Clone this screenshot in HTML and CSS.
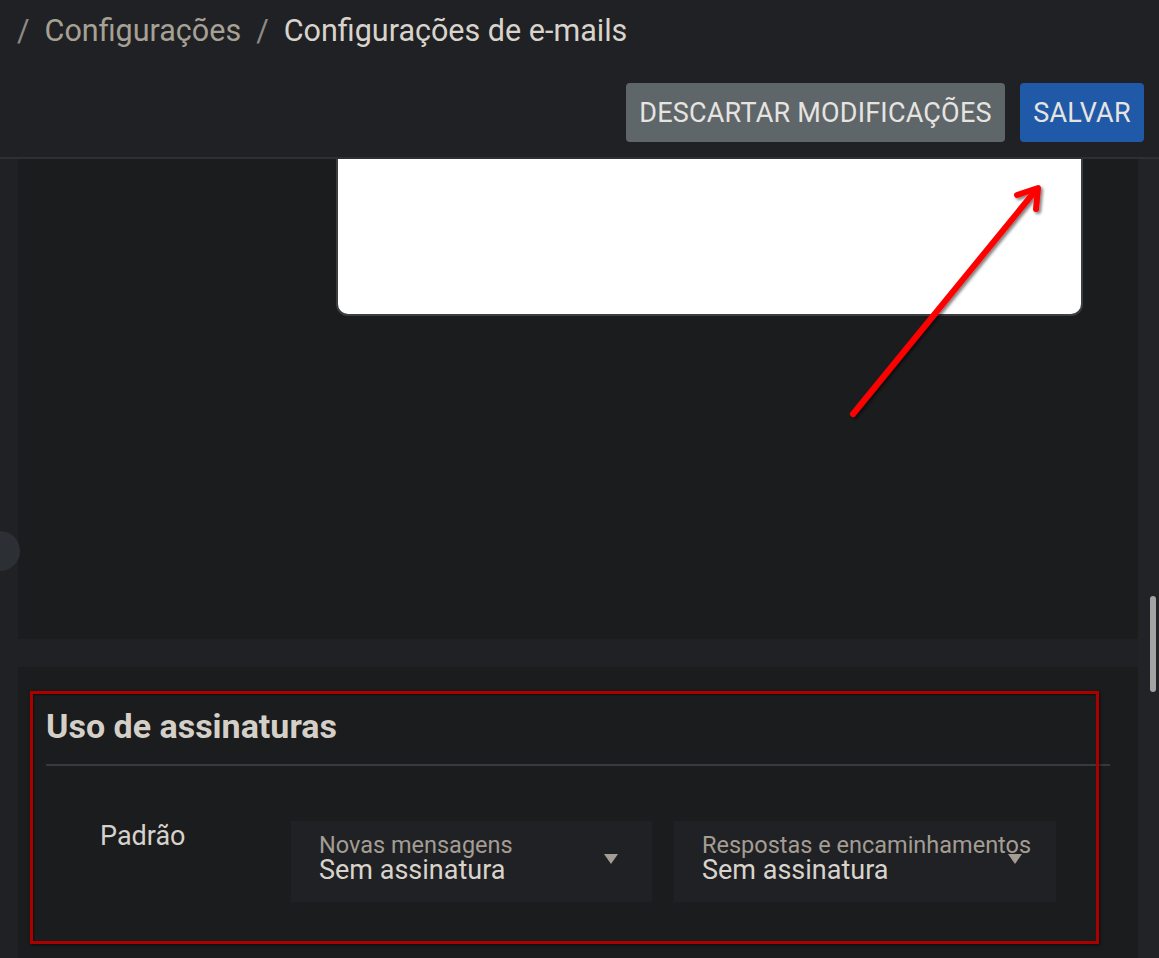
FILE: index.html
```html
<!DOCTYPE html>
<html lang="pt">
<head>
<meta charset="utf-8">
<link rel="stylesheet" href="styles.css">
</head>
<body>
<header class="topbar">
  <nav class="crumbs">
    <span class="sep">/</span>
    <span class="crumb-link">Configurações</span>
    <span class="sep cur">/</span>
    <span class="crumb-cur">Configurações de e-mails</span>
  </nav>
  <div class="actions">
    <button class="btn btn-discard">DESCARTAR MODIFICAÇÕES</button>
    <button class="btn btn-save">SALVAR</button>
  </div>
</header>
<div class="body">
  <main class="content">
    <section class="panel panel-editor">
      <div class="preview"></div>
      <span class="side-knob"></span>
    </section>
    <section class="panel panel-usage">
      <h2 class="usage-title">Uso de assinaturas</h2>
      <div class="usage-row">
        <div class="usage-label">Padrão</div>
        <div class="select">
          <span class="sel-label">Novas mensagens</span>
          <span class="sel-value">Sem assinatura</span>
          <span class="caret"></span>
        </div>
        <div class="select">
          <span class="sel-label">Respostas e encaminhamentos</span>
          <span class="sel-value">Sem assinatura</span>
          <span class="caret"></span>
        </div>
      </div>
    </section>
  </main>
  <div class="scroll-track"><span class="scroll-thumb"></span></div>
</div>
<div class="annot-box"></div>
<svg class="annot-arrow" width="1159" height="958" viewBox="0 0 1159 958">
  <defs>
    <filter id="sh" x="-20%" y="-20%" width="140%" height="140%">
      <feDropShadow dx="2" dy="2" stdDeviation="1.5" flood-color="#000" flood-opacity="0.5"/>
    </filter>
  </defs>
  <g filter="url(#sh)" stroke="#ff0000" stroke-width="6" stroke-linecap="round" stroke-linejoin="round" fill="none">
    <path d="M853 414 L1036 190"/>
    <path d="M1017 195 L1038 188 L1036 209"/>
  </g>
</svg>
</body>
</html>
```
FILE: styles.css
```css
* { box-sizing: border-box; }
html, body { margin: 0; padding: 0; }
body {
  width: 1159px;
  height: 958px;
  overflow: hidden;
  background: #202124;
  font-family: Roboto, "Liberation Sans", sans-serif;
  color: #d8d4cc;
  position: relative;
}
.topbar {
  height: 159px;
  border-bottom: 2px solid #2d2f32;
  display: flex;
  flex-direction: column;
}
.crumbs {
  display: flex;
  align-items: center;
  gap: 15px;
  padding: 0 0 0 17px;
  height: 60px;
  font-size: 30.5px;
}
.sep { color: #8e8a84; }
.crumb-link { color: #a7a195; }
.crumb-cur { color: #d8d4cc; }
.actions {
  display: flex;
  justify-content: flex-end;
  gap: 15px;
  padding: 23px 15px 0 0;
}
.btn {
  height: 59px;
  border: none;
  border-radius: 4px;
  font-family: Roboto, "Liberation Sans", sans-serif;
  font-size: 27px;
  color: #e6e4e0;
  padding: 0;
  letter-spacing: 0.2px;
}
.btn-discard { background: #5f6669; width: 379px; }
.btn-save { background: #2059a8; width: 124px; }
.body {
  display: flex;
  height: 799px;
}
.content {
  flex: 1;
  padding-left: 18px;
  display: flex;
  flex-direction: column;
  gap: 28px;
}
.scroll-track {
  width: 21px;
  background: #222326;
  position: relative;
}
.scroll-thumb {
  position: absolute;
  left: 12px;
  top: 437px;
  width: 6px;
  height: 96px;
  border-radius: 3px;
  background: #a3a3a3;
}
.panel {
  background: #1b1c1e;
  position: relative;
}
.panel-editor {
  height: 480px;
  padding-left: 318px;
}
.preview {
  width: 747px;
  height: 157px;
  background: #ffffff;
  border: 2px solid #3c3e41;
  border-top: none;
  border-radius: 0 0 12px 12px;
}
.side-knob {
  position: absolute;
  left: -38px;
  top: 372px;
  width: 40px;
  height: 40px;
  border-radius: 50%;
  background: #2c2f33;
}
.panel-usage {
  flex: 1;
  padding: 37px 28px 0 28px;
}
.usage-title {
  margin: 0;
  font-size: 34px;
  font-weight: 700;
  color: #d4cfc7;
  padding-bottom: 16px;
  border-bottom: 2px solid #37393c;
  line-height: 44px;
}
.usage-row {
  display: flex;
  align-items: flex-start;
  padding-top: 55px;
}
.usage-label {
  width: 245px;
  padding-left: 54px;
  font-size: 27px;
  line-height: 30px;
  color: #d6d2cb;
}
.select {
  position: relative;
  width: 361px;
  height: 81px;
  background: #202124;
  margin-right: 22px;
  padding: 12px 28px 0 28px;
  display: flex;
  flex-direction: column;
}
.select + .select { width: 382px; }
.sel-label {
  font-size: 23.5px;
  line-height: 24px;
  color: #a39d93;
  white-space: nowrap;
}
.sel-value {
  font-size: 27px;
  line-height: 26px;
  color: #d8d4cc;
}
.caret {
  position: absolute;
  right: 34px;
  top: 33px;
  width: 0;
  height: 0;
  border-left: 7px solid transparent;
  border-right: 7px solid transparent;
  border-top: 10px solid #a39d93;
}
.annot-box {
  position: absolute;
  left: 30px;
  top: 691px;
  width: 1069px;
  height: 253px;
  border: 3px solid #aa0000;
  box-shadow: 1px 1px 3px rgba(0,0,0,0.6), inset 1px 1px 2px rgba(0,0,0,0.5);
}
.annot-arrow {
  position: absolute;
  left: 0;
  top: 0;
  pointer-events: none;
}
```
